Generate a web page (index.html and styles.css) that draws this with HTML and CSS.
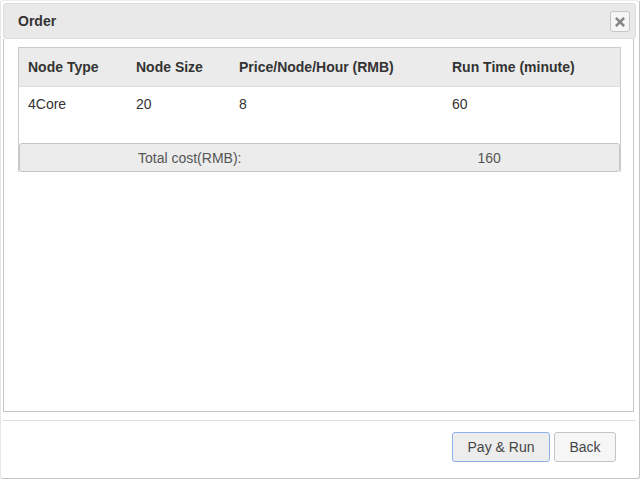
FILE: index.html
```html
<!DOCTYPE html>
<html>
<head>
<meta charset="utf-8">
<link rel="stylesheet" href="styles.css">
</head>
<body>
<div class="dialog">
  <div class="titlebar">
    <span class="title">Order</span>
    <button class="close" aria-label="close">
      <svg width="10" height="10" viewBox="0 0 10 10"><path d="M1.8 1.8 L8.2 8.2 M8.2 1.8 L1.8 8.2" stroke="#858585" stroke-width="2.6" stroke-linecap="square"/></svg>
    </button>
  </div>
  <div class="content">
    <div class="order">
      <div class="row head">
        <div class="c1">Node Type</div>
        <div class="c2">Node Size</div>
        <div class="c3">Price/Node/Hour (RMB)</div>
        <div class="c4">Run Time (minute)</div>
      </div>
      <div class="row body">
        <div class="c1">4Core</div>
        <div class="c2">20</div>
        <div class="c3">8</div>
        <div class="c4">60</div>
      </div>
      <div class="total">
        <div class="t1">Total cost(RMB):</div>
        <div class="t2">160</div>
      </div>
    </div>
  </div>
  <div class="buttons">
    <button class="btn primary">Pay &amp; Run</button>
    <button class="btn back">Back</button>
  </div>
</div>
</body>
</html>
```

FILE: styles.css
```css
html, body {
  margin: 0;
  padding: 0;
  background: #fff;
}
body {
  width: 641px;
  height: 480px;
  overflow: hidden;
  font-family: "Liberation Sans", Arial, sans-serif;
  font-size: 14px;
  color: #333;
}
.dialog {
  box-sizing: border-box;
  width: 640px;
  height: 479px;
  border: 1px solid #c5c5c5;
  border-left-color: #e6e6e6;
  border-top-color: #eeeeee;
  border-radius: 3px;
  padding: 2px 3px 0 2px;
  display: flex;
  flex-direction: column;
}
.titlebar {
  box-sizing: border-box;
  height: 36px;
  background: #e9e9e9;
  border: 1px solid #dddddd;
  border-radius: 3px;
  display: flex;
  align-items: center;
  justify-content: space-between;
  padding: 0 5px 0 14px;
}
.title {
  font-weight: bold;
  font-size: 14px;
  color: #333;
}
.close {
  box-sizing: border-box;
  width: 20px;
  height: 21px;
  margin-top: 1px;
  border: 1px solid #c5c5c5;
  border-radius: 3px;
  background: #f6f6f6;
  padding: 0;
  display: flex;
  align-items: center;
  justify-content: center;
}
.content {
  box-sizing: border-box;
  height: 373px;
  margin-right: 2px;
  border: 1px solid #c5c5c5;
  border-top: none;
  padding: 8px 14px 0 14px;
}
.order {
  border: 1px solid #cccccc;
  border-bottom: none;
  width: 601px;
}
.row {
  display: flex;
}
.row > div {
  box-sizing: border-box;
  padding-left: 9px;
}
.head {
  box-sizing: border-box;
  height: 39px;
  background: #ebebeb;
  border-bottom: 1px solid #dedede;
  align-items: center;
  font-weight: bold;
}
.body {
  height: 56px;
  padding-top: 9px;
  box-sizing: border-box;
  align-items: flex-start;
}
.c1 { width: 108px; }
.c2 { width: 103px; }
.c3 { width: 213px; }
.c4 { width: 177px; }
.total {
  box-sizing: border-box;
  height: 29px;
  background: #ececec;
  border: 1px solid #c5c5c5;
  border-radius: 3px;
  display: flex;
  align-items: center;
  color: #555;
}
.t1 {
  width: 340px;
  text-align: center;
}
.t2 {
  width: 260px;
  text-align: center;
}
.buttons {
  margin-top: 8px;
  border-top: 1px solid #dddddd;
  display: flex;
  justify-content: flex-end;
  gap: 4px;
  padding: 11px 20px 0 0;
}
.btn {
  box-sizing: border-box;
  height: 30px;
  padding: 0;
  font-family: "Liberation Sans", Arial, sans-serif;
  font-size: 14px;
  color: #454545;
  background: #f6f6f6;
  border: 1px solid #c5c5c5;
  border-radius: 3px;
}
.btn.primary {
  width: 98px;
  background: #ededed;
  border-color: #8fb1ea;
}
.btn.back {
  width: 62px;
}
```
